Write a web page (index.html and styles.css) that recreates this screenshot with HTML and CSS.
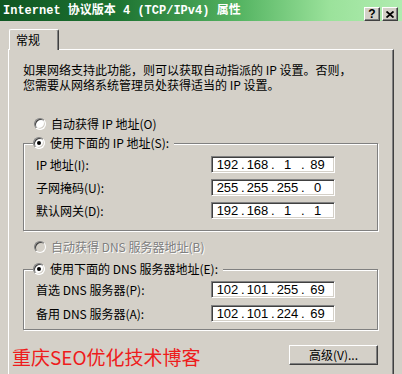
FILE: index.html
```html
<!DOCTYPE html>
<html lang="zh">
	<head>
		<meta charset="UTF-8" />
		<title>Internet 协议版本 4 (TCP/IPv4) 属性</title>
		<link rel="stylesheet" href="styles.css">
	</head>
	<body>
		<div class="window">
			<div class="titlebar">
				<span class="title">Internet 协议版本 4 (TCP/IPv4) 属性</span>
				<div class="tbtns">
					<span class="tbtn">?</span>
					<span class="tbtn">
						<svg width="8" height="7" viewBox="0 0 8 7"><path d="M0.5 0.5 L7.5 6.5 M7.5 0.5 L0.5 6.5" stroke="#000" stroke-width="1.8" fill="none" /></svg>
					</span>
				</div>
			</div>

			<div class="tabs">
				<span class="tab">常规</span>
			</div>

			<div class="panel">
				<div class="intro">
					<span class="line">如果网络支持此功能，则可以获取自动指派的 IP 设置。否则，</span>
					<span class="line">您需要从网络系统管理员处获得适当的 IP 设置。</span>
				</div>

				<div class="opt"><span class="radio"></span>自动获得 IP 地址(O)</div>

				<fieldset class="group group-ip">
					<legend><span class="radio on"></span>使用下面的 IP 地址(S):</legend>
					<div class="row">
						<span class="label">IP 地址(I):</span>
						<div class="ip"><span class="seg">192</span><span class="dot">.</span><span class="seg">168</span><span class="dot">.</span><span class="seg">1</span><span class="dot">.</span><span class="seg">89</span></div>
					</div>
					<div class="row">
						<span class="label">子网掩码(U):</span>
						<div class="ip"><span class="seg">255</span><span class="dot">.</span><span class="seg">255</span><span class="dot">.</span><span class="seg">255</span><span class="dot">.</span><span class="seg">0</span></div>
					</div>
					<div class="row">
						<span class="label">默认网关(D):</span>
						<div class="ip"><span class="seg">192</span><span class="dot">.</span><span class="seg">168</span><span class="dot">.</span><span class="seg">1</span><span class="dot">.</span><span class="seg">1</span></div>
					</div>
				</fieldset>

				<div class="opt off"><span class="radio"></span>自动获得 DNS 服务器地址(B)</div>

				<fieldset class="group group-dns">
					<legend><span class="radio on"></span>使用下面的 DNS 服务器地址(E):</legend>
					<div class="row">
						<span class="label">首选 DNS 服务器(P):</span>
						<div class="ip"><span class="seg">102</span><span class="dot">.</span><span class="seg">101</span><span class="dot">.</span><span class="seg">255</span><span class="dot">.</span><span class="seg">69</span></div>
					</div>
					<div class="row">
						<span class="label">备用 DNS 服务器(A):</span>
						<div class="ip"><span class="seg">102</span><span class="dot">.</span><span class="seg">101</span><span class="dot">.</span><span class="seg">224</span><span class="dot">.</span><span class="seg">69</span></div>
					</div>
				</fieldset>

				<div class="footer">
					<span class="brand">重庆SEO优化技术博客</span>
					<span class="btn">高级(V)...</span>
				</div>
			</div>
		</div>
	</body>
</html>
```

FILE: styles.css
```css
body {
	margin: 0;
	padding: 0;
	background: #d4d0c8;
	font-family: "Noto Sans CJK SC", sans-serif;
	font-size: 12px;
	color: #000;
	overflow: hidden;
}
.window {
	width: 402px;
	height: 374px;
	background: #d4d0c8;
}
.titlebar {
	height: 21px;
	display: flex;
	justify-content: space-between;
	background: linear-gradient(to right, #0f5622, #1f7533 30%, #56b563 60%, #9be29b 82%, #b0ecb0);
}
.title {
	padding: 4px 0 0 3px;
	line-height: 14px;
	color: #fff;
	font-weight: bold;
	font-family: "Liberation Mono", "Noto Sans CJK SC", monospace;
	font-size: 12px;
}
.tbtns {
	display: flex;
	gap: 2px;
	padding: 7px 4px 0 0;
}
.tbtn {
	width: 14px;
	height: 12px;
	display: flex;
	align-items: center;
	justify-content: center;
	background: #d4d0c8;
	border: 1px solid;
	border-color: #fff #404040 #404040 #fff;
	box-shadow: inset -1px -1px #808080;
	font-family: "Liberation Sans", sans-serif;
	font-weight: bold;
	font-size: 12px;
	line-height: 12px;
}
.tabs {
	height: 28px;
	display: flex;
	align-items: flex-end;
	padding-left: 9px;
}
.tab {
	position: relative;
	z-index: 1;
	height: 20px;
	margin-bottom: -1px;
	padding: 0 18px 0 6px;
	line-height: 19px;
	background: #d4d0c8;
	border: 1px solid;
	border-bottom: 0;
	border-color: #fff #404040 #fff #fff;
	border-radius: 2px 2px 0 0;
	box-shadow: inset -1px 0 #808080;
}
.panel {
	margin: 0 8px 0 8px;
	height: 330px;
	padding: 12px 15px 0 14px;
	border-top: 1px solid #fff;
	border-left: 1px solid #fff;
	border-right: 1px solid #404040;
	box-shadow: inset -1px 0 #808080;
}
.intro {
	white-space: nowrap;
}
.line {
	display: block;
	height: 15px;
	line-height: 15px;
}
.opt {
	margin: 24px 0 0 11px;
	height: 16px;
	display: flex;
	align-items: center;
	gap: 5px;
	line-height: 16px;
}
.opt.off {
	margin-top: 8px;
	color: #808080;
	text-shadow: 1px 1px #fff;
}
.radio {
	width: 10px;
	height: 10px;
	flex: none;
	position: relative;
	border-radius: 50%;
	background: #fff;
	border: 1px solid;
	border-color: #808080 #fff #fff #808080;
	box-shadow: inset 1px 1px #404040, inset -1px -1px #d4d0c8;
}
.opt.off .radio {
	background: #d4d0c8;
}
.radio.on::after {
	content: "";
	position: absolute;
	left: 3px;
	top: 3px;
	width: 4px;
	height: 4px;
	border-radius: 50%;
	background: #000;
}
.group {
	margin: 3px 0 0 0;
	padding: 5px 11px 11px 12px;
	border: 1px solid #808080;
	box-shadow: 1px 1px 0 #fff, inset 1px 1px 0 #fff;
	min-width: 0;
}
.group-dns {
	margin-top: 6px;
	padding-top: 4px;
	padding-bottom: 7px;
}
.group legend {
	margin-left: -3px;
	padding: 0 5px 0 0;
	height: 16px;
	display: flex;
	align-items: center;
	gap: 5px;
	line-height: 16px;
	background: #d4d0c8;
}
.row {
	height: 17px;
	display: flex;
	align-items: center;
}
.row + .row {
	margin-top: 6px;
}
.group-dns .row + .row {
	margin-top: 7px;
}
.label {
	width: 175px;
	white-space: nowrap;
}
.ip {
	width: 120px;
	height: 15px;
	display: flex;
	padding-left: 2px;
	background: #fff;
	border: 1px solid;
	border-color: #808080 #fff #fff #808080;
	box-shadow: inset 1px 1px #404040, inset -1px -1px #d4d0c8;
	font-family: "Liberation Sans", sans-serif;
	font-size: 13px;
	line-height: 16px;
}
.seg {
	width: 27px;
	text-align: center;
}
.dot {
	width: 3px;
	text-align: center;
}
.footer {
	margin: 15px 0 0 -11px;
	display: flex;
	justify-content: space-between;
	align-items: flex-start;
}
.brand {
	margin-top: 1px;
	color: #ee1c1c;
	font-size: 19px;
	line-height: 22px;
}
.btn {
	width: 87px;
	height: 18px;
	text-align: center;
	line-height: 18px;
	background: #d4d0c8;
	border: 1px solid;
	border-color: #fff #404040 #404040 #fff;
	box-shadow: inset -1px -1px #808080;
}
```
